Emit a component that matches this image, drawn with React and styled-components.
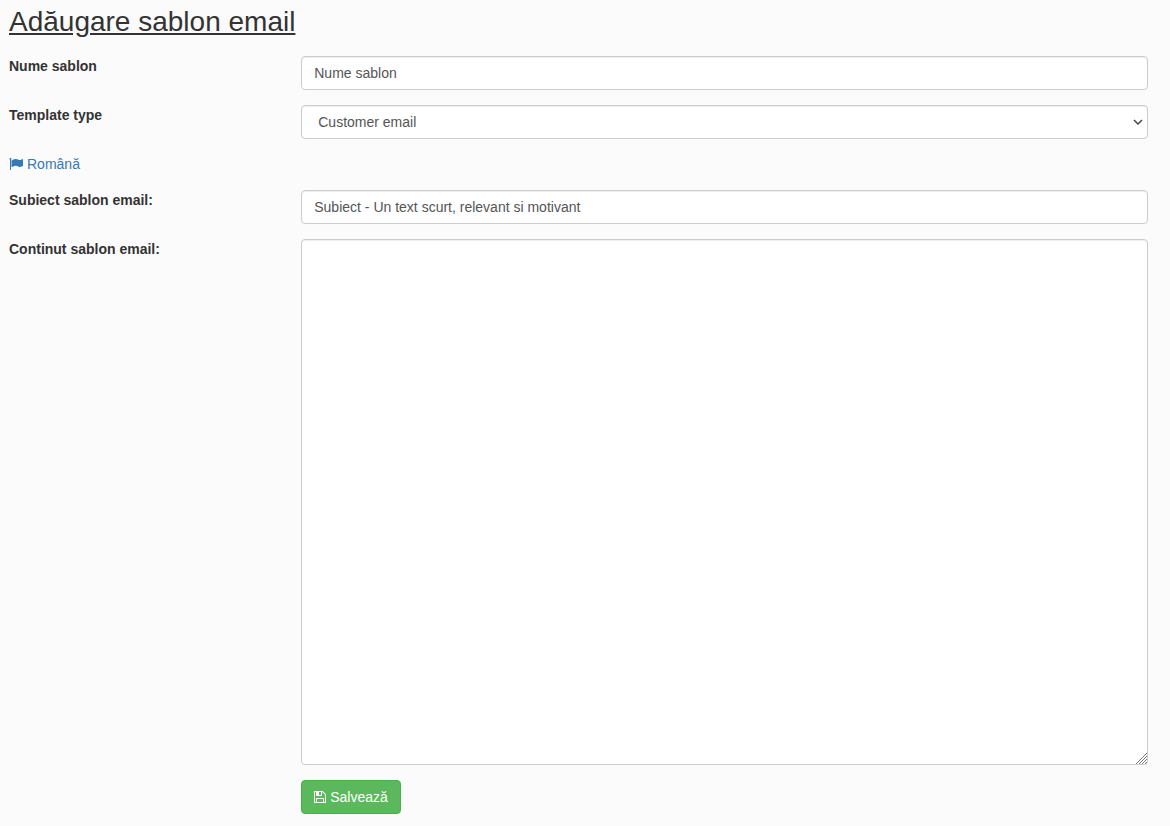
import { useState } from 'react';
import styled, { createGlobalStyle, css } from 'styled-components';

const GlobalStyle = createGlobalStyle`
  * {
    box-sizing: border-box;
  }
  body {
    margin: 0;
    background: #fbfbfb;
    color: #333;
    font-family: 'Liberation Sans', Arial, sans-serif;
    font-size: 14px;
    line-height: 20px;
  }
`;

const Page = styled.main`
  padding: 6px 22px 12px 9px;
`;

const Title = styled.h1`
  margin: 0 0 19px;
  font-size: 28px;
  font-weight: 400;
  line-height: 31px;
  text-decoration: underline;
`;

const FormRow = styled.div`
  display: flex;
  margin: 0 -15px 15px;
`;

const LabelCol = styled.div`
  flex: 0 0 25%;
  padding: 0 15px;
`;

const FieldCol = styled.div`
  flex: 0 0 75%;
  padding: 0 15px;
`;

const Label = styled.label`
  font-weight: 700;
`;

const control = css`
  display: block;
  width: 100%;
  height: 34px;
  padding: 6px 12px;
  border: 1px solid #ccc;
  border-radius: 4px;
  background: #fff;
  box-shadow: inset 0 1px 1px rgba(0, 0, 0, 0.075);
  color: #555;
  font-family: inherit;
  font-size: 14px;
  line-height: 20px;

  &:focus {
    border-color: #66afe9;
    outline: 0;
  }
`;

const Input = styled.input`
  ${control}
`;

const Select = styled.select`
  ${control}
  appearance: none;
  padding: 6px 20px 6px 16px;
  background: #fff
    url("data:image/svg+xml,%3Csvg xmlns='http://www.w3.org/2000/svg' width='10' height='8' viewBox='0 0 10 8'%3E%3Cpath d='M1 2l4 4 4-4' fill='none' stroke='%23444' stroke-width='1.5'/%3E%3C/svg%3E")
    no-repeat right 4px center;
`;

const Textarea = styled.textarea`
  ${control}
  height: 526px;
  resize: both;

  &::-webkit-resizer {
    background: url("data:image/svg+xml,%3Csvg xmlns='http://www.w3.org/2000/svg' width='11' height='11' viewBox='0 0 11 11'%3E%3Cpath d='M0 11L11 0M3 11l8-8M6 11l5-5M9 11l2-2' fill='none' stroke='%23777'/%3E%3C/svg%3E")
      no-repeat right bottom;
  }
`;

const Language = styled.div`
  display: flex;
  margin-bottom: 16px;
`;

const LanguageLink = styled.a`
  display: flex;
  align-items: center;
  gap: 4px;
  color: #337ab7;
  text-decoration: none;
`;

const Icon = styled.svg`
  flex: none;
  width: ${(props) => props.$width}px;
  height: 14px;
  fill: currentColor;
`;

const SaveButton = styled.button`
  display: inline-flex;
  align-items: center;
  gap: 4px;
  padding: 6px 12px;
  border: 1px solid #4cae4c;
  border-radius: 4px;
  background: #5cb85c;
  color: #fff;
  font-family: inherit;
  font-size: 14px;
  line-height: 20px;
  cursor: pointer;

  &:hover {
    background: #449d44;
  }
`;

const FlagIcon = () => (
  <Icon $width={14} viewBox="0 0 1792 1792" aria-hidden="true">
    <path d="M320 256q0 72-64 110v1266q0 13-9.5 22.5t-22.5 9.5h-64q-13 0-22.5-9.5t-9.5-22.5v-1266q-64-38-64-110 0-53 37.5-90.5t90.5-37.5 90.5 37.5 37.5 90.5zm1472 64v763q0 25-12.5 38.5t-39.5 27.5q-215 116-369 116-61 0-123.5-22t-108.5-48-115.5-48-142.5-22q-192 0-464 146-17 9-33 9-26 0-45-19t-19-45v-742q0-32 31-55 21-14 79-43 236-120 421-120 107 0 200 29t219 88q38 19 88 19 54 0 117.5-21t110-47 88-47 54.5-21q26 0 45 19t19 45z" />
  </Icon>
);

const SaveIcon = () => (
  <Icon $width={12} viewBox="128 0 1536 1792" aria-hidden="true">
    <path d="M512 1536h768v-384h-768v384zm896 0h128v-896q0-14-10-38.5t-20-34.5l-281-281q-10-10-34-20t-39-10v416q0 40-28 68t-68 28h-576q-40 0-68-28t-28-68v-416h-128v1280h128v-416q0-40 28-68t68-28h832q40 0 68 28t28 68v416zm-384-928v-320q0-13-9.5-22.5t-22.5-9.5h-192q-13 0-22.5 9.5t-9.5 22.5v320q0 13 9.5 22.5t22.5 9.5h192q13 0 22.5-9.5t9.5-22.5zm640 32v928q0 40-28 68t-68 28h-1344q-40 0-68-28t-28-68v-1344q0-40 28-68t68-28h928q40 0 88 20t76 48l280 280q28 28 48 76t20 88z" />
  </Icon>
);

const Field = ({ id, label, children }) => (
  <FormRow>
    <LabelCol>
      <Label htmlFor={id}>{label}</Label>
    </LabelCol>
    <FieldCol>{children}</FieldCol>
  </FormRow>
);

const App = () => {
  const [name, setName] = useState('Nume sablon');
  const [type, setType] = useState('customer');
  const [subject, setSubject] = useState(
    'Subiect - Un text scurt, relevant si motivant'
  );
  const [content, setContent] = useState('');

  return (
    <Page>
      <GlobalStyle />
      <Title>Adăugare sablon email</Title>
      <form onSubmit={(e) => e.preventDefault()}>
        <Field id="name" label="Nume sablon">
          <Input
            id="name"
            type="text"
            value={name}
            onChange={(e) => setName(e.target.value)}
          />
        </Field>
        <Field id="type" label="Template type">
          <Select
            id="type"
            value={type}
            onChange={(e) => setType(e.target.value)}
          >
            <option value="customer">Customer email</option>
          </Select>
        </Field>
        <Language>
          <LanguageLink href="#ro">
            <FlagIcon />
            Română
          </LanguageLink>
        </Language>
        <Field id="subject" label="Subiect sablon email:">
          <Input
            id="subject"
            type="text"
            value={subject}
            onChange={(e) => setSubject(e.target.value)}
          />
        </Field>
        <Field id="content" label="Continut sablon email:">
          <Textarea
            id="content"
            value={content}
            onChange={(e) => setContent(e.target.value)}
          />
        </Field>
        <FormRow>
          <LabelCol />
          <FieldCol>
            <SaveButton type="submit">
              <SaveIcon />
              Salvează
            </SaveButton>
          </FieldCol>
        </FormRow>
      </form>
    </Page>
  );
};

export default App;
